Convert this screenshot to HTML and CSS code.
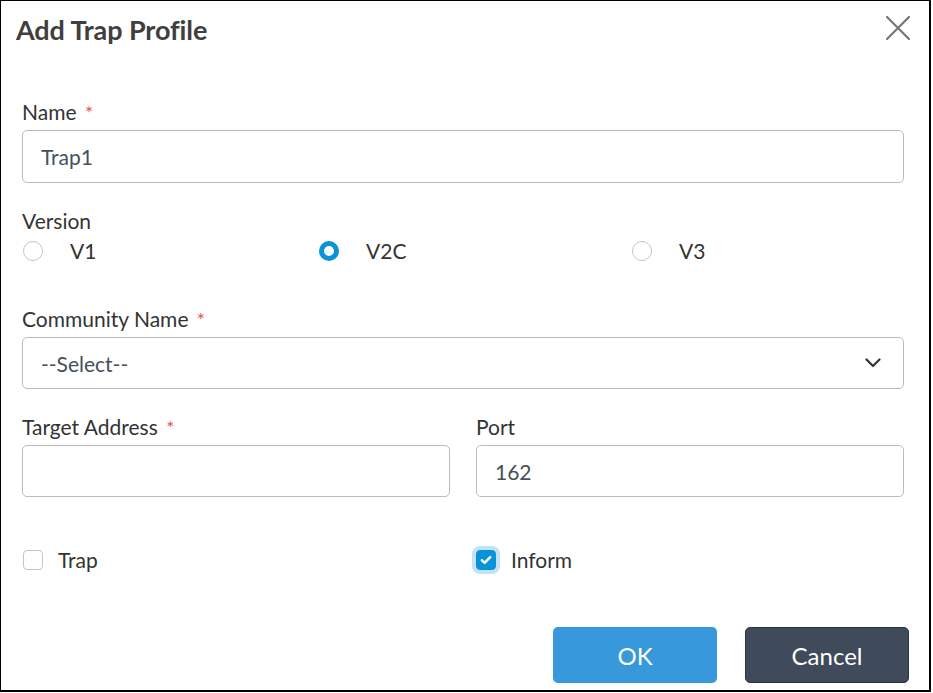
FILE: index.html
```html
<!DOCTYPE html>
<html lang="en">
<head>
<meta charset="utf-8">
<title>Add Trap Profile</title>
<link rel="stylesheet" href="styles.css">
</head>
<body>
<div class="dialog">
  <div class="header">
    <h1 class="title">Add Trap Profile</h1>
    <button class="close" aria-label="Close">
      <svg width="24" height="24" viewBox="0 0 24 24"><path d="M1 1 L23 23 M23 1 L1 23" stroke="#777" stroke-width="2.2" fill="none" stroke-linecap="round"/></svg>
    </button>
  </div>
  <div class="form">
    <div class="field f-name">
      <label class="label">Name <span class="req">*</span></label>
      <div class="input">Trap1</div>
    </div>
    <div class="field f-version">
      <label class="label">Version</label>
      <div class="radios">
        <div class="radio-item"><span class="radio"></span><span class="opt">V1</span></div>
        <div class="radio-item"><span class="radio on"></span><span class="opt">V2C</span></div>
        <div class="radio-item"><span class="radio"></span><span class="opt">V3</span></div>
      </div>
    </div>
    <div class="field f-community">
      <label class="label">Community Name <span class="req">*</span></label>
      <div class="input select">
        <span>--Select--</span>
        <svg class="chev" width="16" height="10" viewBox="0 0 16 10"><path d="M1.5 1.5 L8 8 L14.5 1.5" stroke="#333" stroke-width="2.2" fill="none" stroke-linecap="round" stroke-linejoin="round"/></svg>
      </div>
    </div>
    <div class="row f-target">
      <div class="field">
        <label class="label">Target Address <span class="req">*</span></label>
        <div class="input short"></div>
      </div>
      <div class="field">
        <label class="label">Port</label>
        <div class="input short">162</div>
      </div>
    </div>
    <div class="row checks">
      <div class="check-item"><span class="box"></span><span class="opt">Trap</span></div>
      <div class="check-item"><span class="box on"><svg width="12" height="10" viewBox="0 0 12 10"><path d="M1.8 5.2 L4.6 7.8 L10.2 2.2" stroke="#fff" stroke-width="2.4" fill="none" stroke-linecap="round" stroke-linejoin="round"/></svg></span><span class="opt">Inform</span></div>
    </div>
  </div>
  <div class="footer">
    <button class="btn ok">OK</button>
    <button class="btn cancel">Cancel</button>
  </div>
</div>
</body>
</html>
```
FILE: styles.css
```css
html, body {
  margin: 0;
  padding: 0;
  background: #fff;
}
body {
  font-family: Lato, "Noto Sans", sans-serif;
  color: #333;
}
.dialog {
  box-sizing: border-box;
  width: 931px;
  height: 692px;
  border: 1px solid #000;
  border-right-width: 2px;
  border-bottom-width: 2px;
  background: #fff;
}
.header {
  display: flex;
  justify-content: space-between;
  align-items: flex-start;
  padding: 13px 19px 0 15px;
  height: 32px;
}
.title {
  margin: 0;
  font-size: 27px;
  line-height: 32px;
  font-weight: 700;
  color: #3f3f3f;
  letter-spacing: -0.1px;
}
.close {
  margin-top: 2px;
  padding: 0;
  border: 0;
  background: none;
  width: 24px;
  height: 24px;
  display: block;
}
.close svg { display: block; }
.form {
  padding: 0 25px 0 21px;
}
.label {
  display: block;
  font-size: 21px;
  line-height: 22px;
  height: 21px;
  padding-top: 1px;
  color: #333;
  margin-bottom: 8px;
}
.req {
  color: #e8505b;
  font-size: 19px;
  line-height: 0;
  margin-left: 3px;
}
.input {
  box-sizing: border-box;
  height: 53px;
  border: 1px solid #bcbcbc;
  border-radius: 5px;
  padding: 0 18px;
  display: flex;
  align-items: center;
  font-size: 21px;
  color: #46505b;
}
.select, .input.short { height: 52px; }
.f-name { margin-top: 54px; }
.f-version { margin-top: 26px; }
.f-community { margin-top: 44px; }
.f-target { margin-top: 26px; }
.select {
  justify-content: space-between;
  padding-right: 22px;
}
.chev { display: block; }
.radios {
  display: grid;
  grid-template-columns: 296px 313px 1fr;
  height: 24px;
  margin-top: 7px;
}
.radio-item, .check-item {
  display: flex;
  align-items: center;
}
.radio {
  box-sizing: border-box;
  width: 20px;
  height: 20px;
  border-radius: 50%;
  border: 1px solid #c4c4c4;
  margin-left: 1px;
  margin-right: 27px;
  background: #fff;
  flex: none;
}
.radio.on {
  border: 5px solid #0a93d8;
}
.opt {
  font-size: 21px;
  line-height: 24px;
  color: #333;
}
.row {
  display: grid;
  grid-template-columns: 1fr 1fr;
  column-gap: 26px;
}
.checks {
  margin-top: 49px;
  height: 28px;
}
.box {
  box-sizing: border-box;
  width: 20px;
  height: 20px;
  border: 1px solid #c4c4c4;
  border-radius: 4px;
  margin-left: 1px;
  margin-right: 15px;
  display: flex;
  align-items: center;
  justify-content: center;
  flex: none;
}
.check-item:nth-child(2) .box { margin-left: 0; }
.box.on {
  background: #0a93d8;
  border-color: #0a93d8;
  box-shadow: 0 0 0 4px #c2e3f7;
}
.box svg { display: block; }
.footer {
  display: flex;
  justify-content: flex-end;
  gap: 28px;
  padding: 0 20px 0 0;
  margin-top: 53px;
}
.btn {
  width: 164px;
  height: 56px;
  border: 0;
  border-radius: 5px;
  font-family: Lato, "Noto Sans", sans-serif;
  font-size: 24px;
  color: #fff;
  padding: 0;
}
.ok { background: #3798db; }
.cancel {
  background: #3f4a5a;
  border: 1px solid #2c3440;
}
```
